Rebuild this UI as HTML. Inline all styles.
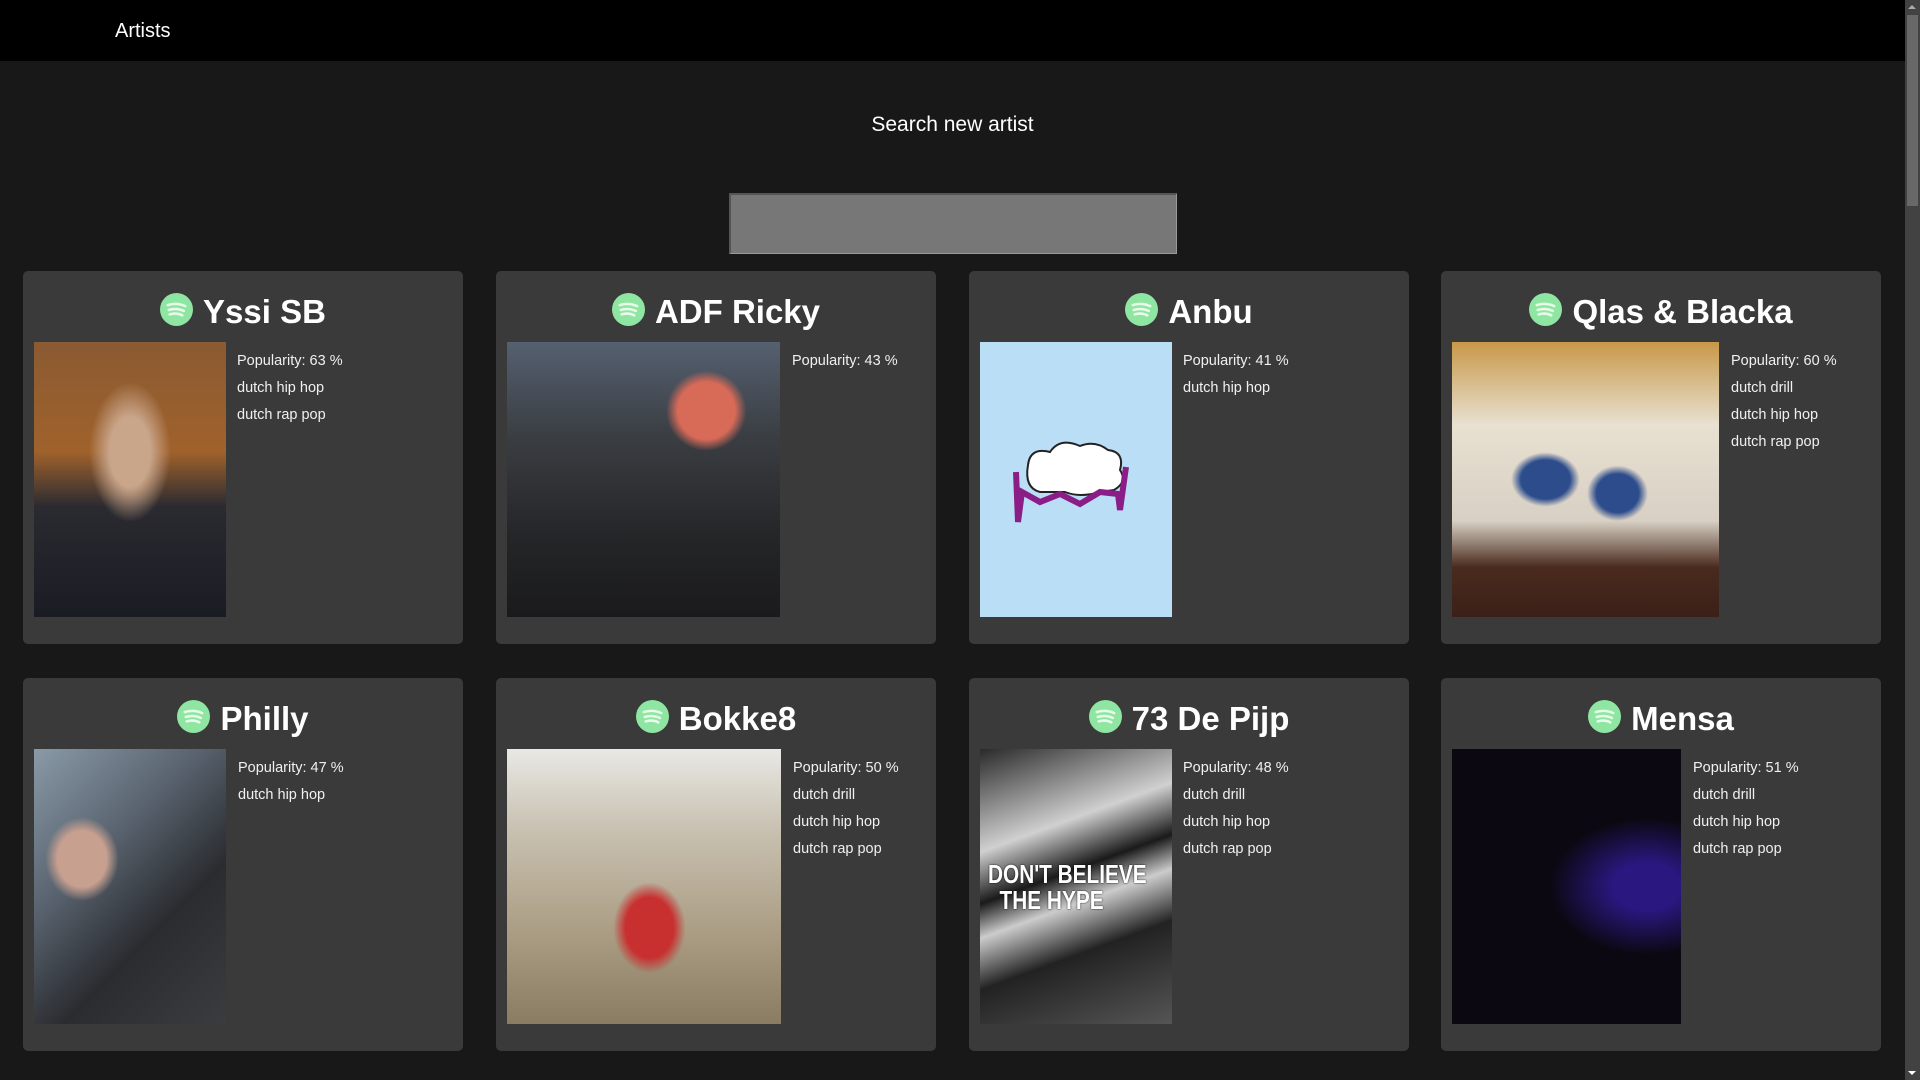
<!DOCTYPE html>
<html><head><meta charset="utf-8"><style>
*{margin:0;padding:0;box-sizing:border-box}
body{width:1920px;height:1080px;background:#181818;font-family:"Liberation Sans",Arial,sans-serif;color:#fff;position:relative;overflow:hidden}
.hdr{position:absolute;left:0;top:0;width:1905px;height:61px;background:#000}
.hdr span{position:absolute;left:115px;top:20px;font-size:20px}
.sb{position:absolute;right:0;top:0;width:15px;height:1080px;background:#424242}
.sb .th{position:absolute;left:2px;top:15px;width:11px;height:191px;background:#686868}
.sb .up{position:absolute;left:3px;top:5px;border-left:4px solid transparent;border-right:4px solid transparent;border-bottom:4px solid #aaa}
.sb .dn{position:absolute;left:3px;bottom:5px;border-left:4px solid transparent;border-right:4px solid transparent;border-top:4px solid #fff}
.st{position:absolute;left:0;width:1905px;top:113px;text-align:center;font-size:21px}
.inp{position:absolute;left:729px;top:193px;width:448px;height:61px;background:#777;border-top:2px solid #555;border-left:2px solid #555;border-bottom:1px solid #999;border-right:1px solid #999}
.card{position:absolute;width:440px;height:373px;background:#3a3a3a;border-radius:5px}
.card h2{position:absolute;left:0;right:0;top:21px;text-align:center;font-size:33px;font-weight:bold;line-height:40px;white-space:nowrap}
.card h2 svg{vertical-align:-3px;margin-right:10px}
.img{position:absolute;left:11px;top:71px;height:275px}
.info{position:absolute;top:77px;font-size:14.5px;line-height:27px;color:#f0f0f0}
</style></head><body>
<div class="hdr"><span>Artists</span></div>
<div class="st">Search new artist</div>
<div class="inp"></div>
<div class="sb"><div class="up"></div><div class="th"></div><div class="dn"></div></div>

<svg width="0" height="0" style="position:absolute"><defs><symbol id="sp" viewBox="0 0 34 34"><circle cx="17" cy="17" r="17" fill="#8fe6a2"/><path d="M8 12.5Q17 9.5 26 13.5M9 17.5Q17 15 24.5 18.5M10 22Q17 20 23 23" stroke="#e8fbe9" stroke-width="2.6" fill="none" stroke-linecap="round"/></symbol></defs></svg>

<div class="card" style="left:23px;top:271px"><h2><svg width="33" height="33"><use href="#sp"/></svg>Yssi SB</h2>
<div class="img" style="width:192px;background:radial-gradient(ellipse at 50% 40%,#c9a58a 0 15%,transparent 30%),linear-gradient(180deg,#8a5a32 0%,#a0622c 40%,#2a2a30 60%,#1a1c24 100%)"></div>
<div class="info" style="left:214px">Popularity: 63 %<br>dutch hip hop<br>dutch rap pop</div></div>

<div class="card" style="left:496px;top:271px"><h2><svg width="33" height="33"><use href="#sp"/></svg>ADF Ricky</h2>
<div class="img" style="width:273px;background:radial-gradient(circle at 73% 25%,#d86a58 0 10%,transparent 14%),linear-gradient(180deg,#556070 0%,#3a3d42 35%,#252628 70%,#1a1a1c 100%)"></div>
<div class="info" style="left:296px">Popularity: 43 %</div></div>

<div class="card" style="left:969px;top:271px"><h2><svg width="33" height="33"><use href="#sp"/></svg>Anbu</h2>
<div class="img" style="width:192px;background:#bbdef7"><svg width="192" height="275" style="position:absolute;left:0;top:0"><path d="M48 123Q50 105 70 110Q80 95 100 104Q115 98 128 108Q145 110 140 128Q148 140 134 148L120 150Q100 156 85 150L60 150Q44 146 48 123Z" fill="#fff" stroke="#222" stroke-width="2"/><path d="M36 130L38 180L42 150L60 160L80 152L100 162L120 150L138 152L140 168L146 125" fill="none" stroke="#8a1e86" stroke-width="6"/></svg></div>
<div class="info" style="left:214px">Popularity: 41 %<br>dutch hip hop</div></div>

<div class="card" style="left:1441px;top:271px"><h2><svg width="33" height="33"><use href="#sp"/></svg>Qlas &amp; Blacka</h2>
<div class="img" style="width:267px;background:radial-gradient(ellipse at 35% 50%,#2c4c8c 0 10%,transparent 14%),radial-gradient(ellipse at 62% 55%,#2c4c8c 0 9%,transparent 13%),linear-gradient(180deg,#c89848 0%,#e8e0d0 30%,#d8d0c4 65%,#4a2a1e 82%,#3a2018 100%)"></div>
<div class="info" style="left:290px">Popularity: 60 %<br>dutch drill<br>dutch hip hop<br>dutch rap pop</div></div>

<div class="card" style="left:23px;top:678px"><h2><svg width="33" height="33"><use href="#sp"/></svg>Philly</h2>
<div class="img" style="width:192px;background:radial-gradient(ellipse at 25% 40%,#c8a090 0 12%,transparent 18%),linear-gradient(135deg,#8a9aa8 0%,#5a6470 35%,#2a2c30 65%,#3a3c40 100%)"></div>
<div class="info" style="left:215px">Popularity: 47 %<br>dutch hip hop</div></div>

<div class="card" style="left:496px;top:678px"><h2><svg width="33" height="33"><use href="#sp"/></svg>Bokke8</h2>
<div class="img" style="width:274px;background:radial-gradient(ellipse at 52% 65%,#c83030 0 12%,transparent 18%),linear-gradient(180deg,#e8e8e4 0%,#c8c0b0 30%,#a89a80 70%,#8a7c62 100%)"></div>
<div class="info" style="left:297px">Popularity: 50 %<br>dutch drill<br>dutch hip hop<br>dutch rap pop</div></div>

<div class="card" style="left:969px;top:678px"><h2><svg width="33" height="33"><use href="#sp"/></svg>73 De Pijp</h2>
<div class="img" style="width:192px;background:linear-gradient(160deg,#2a2a2a 0%,#d0d0d0 30%,#1a1a1a 45%,#ccc 55%,#222 70%,#555 100%)"><div style="position:absolute;left:8px;top:112px;font:bold 26px 'Liberation Sans Narrow','Liberation Sans',sans-serif;color:#fff;line-height:26px;transform:scaleX(.8);transform-origin:left;white-space:nowrap;text-shadow:0 0 2px #000">DON'T BELIEVE<br>&nbsp;&nbsp;THE HYPE</div></div>
<div class="info" style="left:214px">Popularity: 48 %<br>dutch drill<br>dutch hip hop<br>dutch rap pop</div></div>

<div class="card" style="left:1441px;top:678px"><h2><svg width="33" height="33"><use href="#sp"/></svg>Mensa</h2>
<div class="img" style="width:229px;background:radial-gradient(ellipse at 85% 50%,#2a1880 0 12%,transparent 35%),#0c0812"></div>
<div class="info" style="left:252px">Popularity: 51 %<br>dutch drill<br>dutch hip hop<br>dutch rap pop</div></div>
</body></html>
